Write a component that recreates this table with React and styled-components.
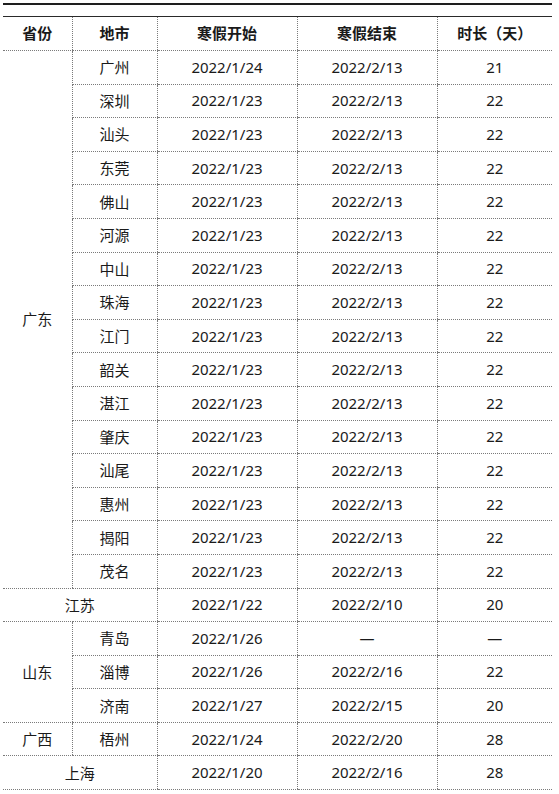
import React from "react";
import styled, { createGlobalStyle } from "styled-components";

const GlobalStyle = createGlobalStyle`
  html, body {
    margin: 0;
    padding: 0;
    background: #fff;
  }
  body {
    font-family: "Noto Sans", "Noto Sans CJK SC", sans-serif;
    color: #1a1a1a;
  }
`;

const Page = styled.div`
  width: 549px;
  padding: 3px 0 0 3px;
`;

const TopRule = styled.div`
  height: 2px;
  background: #1e1e1e;
  margin-bottom: 11px;
`;

const Table = styled.table`
  width: 549px;
  border-collapse: collapse;
  table-layout: fixed;
  border-top: 1px solid #2a2a2a;
  font-size: 15px;
`;

const Col = styled.col`
  width: ${(p) => p.w}px;
`;

const HeadRow = styled.tr`
  height: 34px;
`;

const Row = styled.tr`
  height: 33.6px;
`;

const Th = styled.th`
  font-weight: 700;
  text-align: center;
  padding: 0 0 2px;
  border-bottom: 1px dotted #7a7a7a;
  border-left: ${(p) => (p.first ? "none" : "1px dotted #7a7a7a")};
`;

const Td = styled.td`
  text-align: center;
  padding: 0 0 1px;
  border-bottom: 1px dotted #7a7a7a;
  border-left: ${(p) => (p.first ? "none" : "1px dotted #7a7a7a")};
`;

const guangdong = [
  ["广州", "2022/1/24", "2022/2/13", "21"],
  ["深圳", "2022/1/23", "2022/2/13", "22"],
  ["汕头", "2022/1/23", "2022/2/13", "22"],
  ["东莞", "2022/1/23", "2022/2/13", "22"],
  ["佛山", "2022/1/23", "2022/2/13", "22"],
  ["河源", "2022/1/23", "2022/2/13", "22"],
  ["中山", "2022/1/23", "2022/2/13", "22"],
  ["珠海", "2022/1/23", "2022/2/13", "22"],
  ["江门", "2022/1/23", "2022/2/13", "22"],
  ["韶关", "2022/1/23", "2022/2/13", "22"],
  ["湛江", "2022/1/23", "2022/2/13", "22"],
  ["肇庆", "2022/1/23", "2022/2/13", "22"],
  ["汕尾", "2022/1/23", "2022/2/13", "22"],
  ["惠州", "2022/1/23", "2022/2/13", "22"],
  ["揭阳", "2022/1/23", "2022/2/13", "22"],
  ["茂名", "2022/1/23", "2022/2/13", "22"],
];

const shandong = [
  ["青岛", "2022/1/26", "—", "—"],
  ["淄博", "2022/1/26", "2022/2/16", "22"],
  ["济南", "2022/1/27", "2022/2/15", "20"],
];

const Cells = ({ cells }) =>
  cells.map((c, i) => <Td key={i}>{c}</Td>);

export default function App() {
  return (
    <Page>
      <GlobalStyle />
      <TopRule />
      <Table>
        <colgroup>
          <Col w={69} />
          <Col w={85} />
          <Col w={140} />
          <Col w={140} />
          <Col w={115} />
        </colgroup>
        <thead>
          <HeadRow>
            <Th first>省份</Th>
            <Th>地市</Th>
            <Th>寒假开始</Th>
            <Th>寒假结束</Th>
            <Th>时长（天）</Th>
          </HeadRow>
        </thead>
        <tbody>
          {guangdong.map((r, i) => (
            <Row key={r[0]}>
              {i === 0 && (
                <Td first rowSpan={guangdong.length}>
                  广东
                </Td>
              )}
              <Cells cells={r} />
            </Row>
          ))}
          <Row>
            <Td first colSpan={2}>
              江苏
            </Td>
            <Cells cells={["2022/1/22", "2022/2/10", "20"]} />
          </Row>
          {shandong.map((r, i) => (
            <Row key={r[0]}>
              {i === 0 && (
                <Td first rowSpan={shandong.length}>
                  山东
                </Td>
              )}
              <Cells cells={r} />
            </Row>
          ))}
          <Row>
            <Td first>广西</Td>
            <Cells cells={["梧州", "2022/1/24", "2022/2/20", "28"]} />
          </Row>
          <Row>
            <Td first colSpan={2}>
              上海
            </Td>
            <Cells cells={["2022/1/20", "2022/2/16", "28"]} />
          </Row>
        </tbody>
      </Table>
    </Page>
  );
}
